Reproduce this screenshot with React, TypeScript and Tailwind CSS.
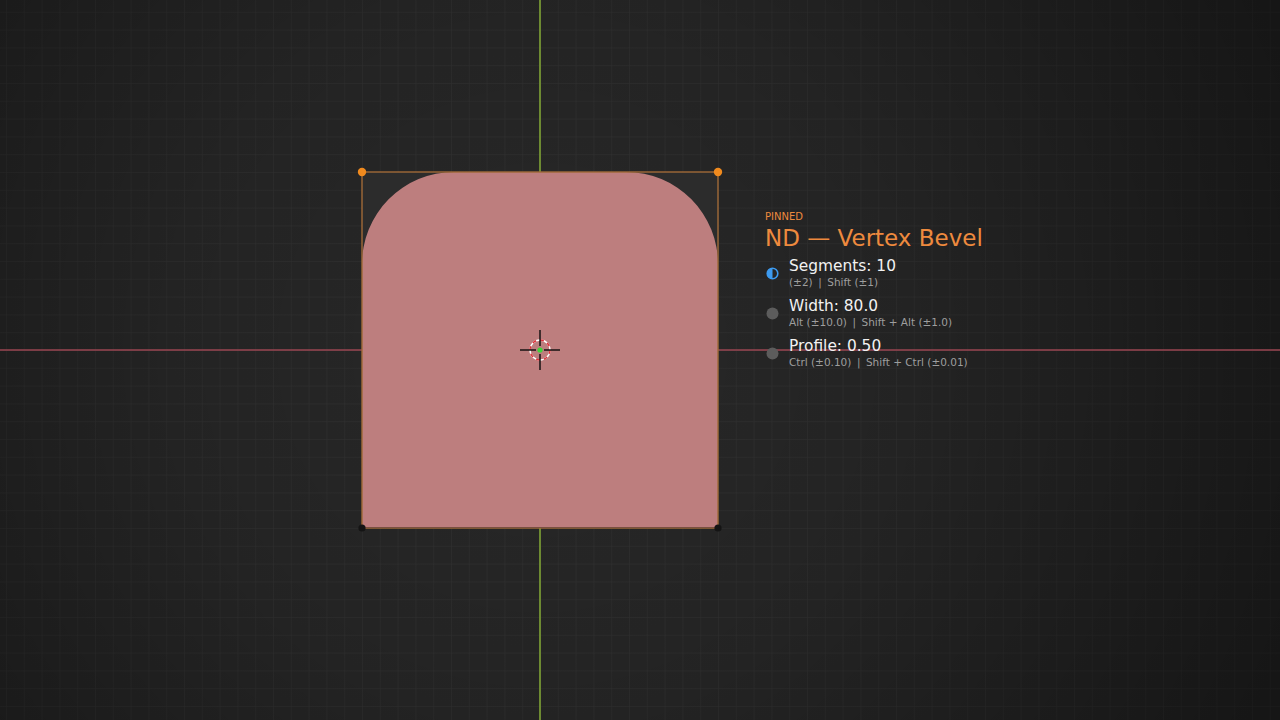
import React from "react";

const Sub = ({ parts }: { parts: string[] }) => (
  <div className="text-[10.5px] leading-[13px] text-[#9e9e9e] mt-[1px] flex">
    {parts.map((p, i) => (
      <React.Fragment key={i}>
        {i > 0 && <span className="mx-[5.5px]">|</span>}
        <span className="whitespace-pre">{p}</span>
      </React.Fragment>
    ))}
  </div>
);

const Row = ({
  icon,
  title,
  sub,
}: {
  icon: "half" | "dot";
  title: string;
  sub: string[];
}) => (
  <div className="flex items-start gap-[10px] h-[40px]">
    <div className="w-[13px] h-[13px] mt-[10px] shrink-0">
      {icon === "half" ? (
        <svg width="13" height="13" viewBox="0 0 13 13">
          <circle cx="6.5" cy="6.5" r="5.3" fill="none" stroke="#3d9bf0" strokeWidth="1.6" />
          <path d="M6.5 1.2 A5.3 5.3 0 0 0 6.5 11.8 Z" fill="#3d9bf0" />
        </svg>
      ) : (
        <svg width="13" height="13" viewBox="0 0 13 13">
          <circle cx="6.5" cy="6.5" r="6" fill="#5c5c5c" />
        </svg>
      )}
    </div>
    <div className="flex flex-col">
      <div className="text-[15.4px] leading-[18px] text-[#f2f2f2]">{title}</div>
      <Sub parts={sub} />
    </div>
  </div>
);

export default function App() {
  return (
    <div
      className="relative w-[1280px] h-[720px] overflow-hidden bg-[#222222]"
      style={{ fontFamily: '"DejaVu Sans", "Liberation Sans", sans-serif' }}
    >
      <svg width="1280" height="720" className="block">
        <defs>
          <pattern id="grid" x="540" y="350" width="17.8" height="17.8" patternUnits="userSpaceOnUse">
            <path d="M0 0 H17.8 M0 0 V17.8" stroke="#353535" strokeWidth="1" fill="none" />
          </pattern>
          <radialGradient id="vig" cx="540" cy="350" r="800" gradientUnits="userSpaceOnUse">
            <stop offset="0" stopColor="#000" stopOpacity="0" />
            <stop offset="0.45" stopColor="#000" stopOpacity="0.12" />
            <stop offset="1" stopColor="#000" stopOpacity="0.45" />
          </radialGradient>
        </defs>
        <rect width="1280" height="720" fill="#282828" />
        <rect width="1280" height="720" fill="url(#grid)" />
        <rect width="1280" height="720" fill="url(#vig)" />
        {/* axes */}
        <line x1="540" y1="0" x2="540" y2="720" stroke="#6d8a32" strokeWidth="2" />
        <line x1="0" y1="350" x2="1280" y2="350" stroke="#9a4652" strokeWidth="1.6" />
        {/* face */}
        <rect x="362" y="172" width="356" height="356" fill="#2c2c2c" />
        <path
          d="M362 528 V265 A92 92 0 0 1 454 172 H626 A92 92 0 0 1 718 265 V528 Z"
          fill="#bd7e7e"
        />
        <rect x="362" y="172" width="356" height="356" fill="none" stroke="#a06a38" strokeWidth="1.4" />
        <line x1="362" y1="527.5" x2="718" y2="527.5" stroke="#7a5040" strokeWidth="1.2" />
        <circle cx="362" cy="172" r="4.2" fill="#f08a1e" />
        <circle cx="718" cy="172" r="4.2" fill="#f08a1e" />
        <circle cx="362" cy="528" r="3.6" fill="#141414" />
        <circle cx="718" cy="528" r="3.6" fill="#141414" />
        {/* 3d cursor */}
        <circle cx="540" cy="350" r="10" fill="none" stroke="#ffffff" strokeWidth="1.4" />
        <circle cx="540" cy="350" r="10" fill="none" stroke="#e0303a" strokeWidth="1.4" strokeDasharray="3.9 3.9" />
        <line x1="520" y1="350" x2="536" y2="350" stroke="#0a0a0a" strokeWidth="1.4" />
        <line x1="544" y1="350" x2="560" y2="350" stroke="#0a0a0a" strokeWidth="1.4" />
        <line x1="540" y1="330" x2="540" y2="346" stroke="#0a0a0a" strokeWidth="1.4" />
        <line x1="540" y1="354" x2="540" y2="370" stroke="#0a0a0a" strokeWidth="1.4" />
        <circle cx="540" cy="350" r="2.6" fill="#3fd43a" />
      </svg>

      <div className="absolute left-[765px] top-[210px] flex flex-col">
        <div className="text-[10px] leading-[13px] text-[#ee8a3e]">PINNED</div>
        <div className="text-[23px] leading-[30px] text-[#ee8a3e] mb-[4px]">ND — Vertex Bevel</div>
        <div className="flex flex-col ml-[1px]">
          <Row icon="half" title="Segments: 10" sub={["(±2)", "Shift (±1)"]} />
          <Row icon="dot" title="Width: 80.0" sub={["Alt (±10.0)", "Shift + Alt (±1.0)"]} />
          <Row icon="dot" title="Profile: 0.50" sub={["Ctrl (±0.10)", "Shift + Ctrl (±0.01)"]} />
        </div>
      </div>
    </div>
  );
}
